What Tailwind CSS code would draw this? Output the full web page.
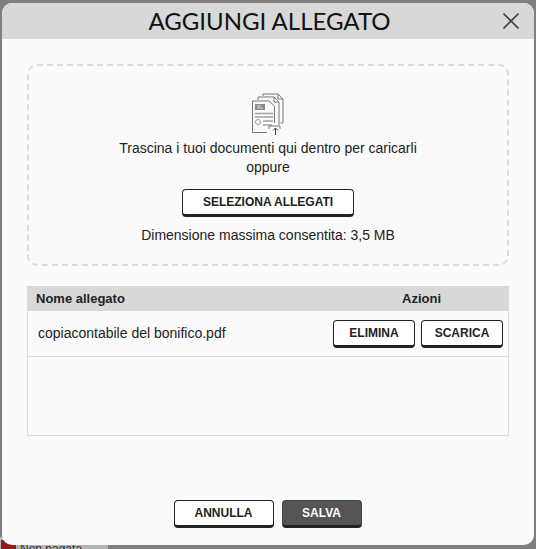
<!DOCTYPE html>
<html lang="it">
<head>
    <meta charset="UTF-8">
    <title>Aggiungi allegato</title>
    <script src="https://cdn.jsdelivr.net/npm/@tailwindcss/browser@4"></script>
</head>
<body class="bg-[#7f7f7f] w-[536px] h-[549px] overflow-hidden font-['Liberation_Sans',sans-serif] text-[#222]">
    <div class="relative h-[549px] pt-[3px] px-[2px]">
        <!-- pagina sotto il modale -->
        <div class="absolute left-0 top-[537px] w-[108px] h-[12px] bg-[#b5b5b5] flex items-start">
            <span class="mt-[3px] ml-[1px] w-[15px] h-[9px] bg-[#8e1b1b]"></span>
            <span class="ml-[4px] mt-[5px] text-[12px] text-[#333] leading-[14px]">Non pagata</span>
        </div>

        <div class="relative w-[532px] h-[542px] bg-[#fafafa] rounded-[10px] overflow-hidden flex flex-col">
            <div class="relative h-[36px] bg-[#d8d8d8] flex items-center justify-center shrink-0">
                <h1 class="font-['Lato',sans-serif] text-[24px] leading-[36px] text-[#111] ml-[3px]">AGGIUNGI ALLEGATO</h1>
                <svg class="absolute left-[501px] top-[10px]" width="16" height="16" viewBox="0 0 16 16" fill="none" stroke="#444" stroke-width="1.6">
                    <path d="M0.5 0.5 L15.5 15.5 M15.5 0.5 L0.5 15.5"/>
                </svg>
            </div>

            <div class="flex flex-col flex-1 px-[25px] pt-[25px]">
                <div class="h-[202px] border-2 border-dashed border-[#dcdcdc] rounded-[10px] flex flex-col items-center pt-[27px]">
                    <svg width="32" height="42" viewBox="0 0 32 42" fill="none" stroke="#777" stroke-width="1">
                        <path d="M11 3 V1 H26 L31 6 V30 H28.5"/>
                        <path d="M26 1 V6 H31"/>
                        <path d="M6 7 V4 H22 L27 9 V32"/>
                        <path d="M22 4 V9 H27"/>
                        <path d="M0.5 39.5 V8 H17 L22.5 13 V30"/>
                        <path d="M0.5 39.5 H15"/>
                        <rect x="3" y="11" width="10" height="6" fill="#8a8a8a" stroke="none"/>
                        <path d="M5 13 H9 M5 15 H11" stroke="#ddd"/>
                        <path d="M3 20.5 H21 M3 24 H21 M11 28 H21 M11 32 H20" stroke="#a0a0a0" stroke-width="1.5"/>
                        <circle cx="6" cy="29" r="2.5" stroke="#999"/>
                        <path d="M17 36 V33 H28 V36"/>
                        <path d="M23.5 42 V35 M21 37.5 L23.5 35 L26 37.5" stroke="#444"/>
                    </svg>
                    <p class="mt-[4px] text-[14px] leading-[18.5px] text-center text-[#222] w-[340px]">Trascina i tuoi documenti qui dentro per caricarli oppure</p>
                    <button class="mt-[13px] w-[172px] h-[28px] bg-white border border-[#222] border-b-[3px] rounded-[4px] text-[12px] font-bold text-[#222]">SELEZIONA ALLEGATI</button>
                    <p class="mt-[9px] text-[14px] leading-[19px] text-[#222]">Dimensione massima consentita: 3,5 MB</p>
                </div>

                <div class="mt-[20px] h-[150px] border border-[#dcdcdc] border-t-0 flex flex-col">
                    <div class="-mx-px h-[25px] bg-[#d8d8d8] flex items-center text-[13px] font-bold text-[#222]">
                        <span class="pl-[9px] flex-1">Nome allegato</span>
                        <span class="w-[107px]">Azioni</span>
                    </div>
                    <div class="h-[46px] border-b border-[#dcdcdc] flex items-center justify-between pl-[10px] pr-[5px]">
                        <span class="text-[14px]">copiacontabile del bonifico.pdf</span>
                        <div class="flex gap-[6px]">
                            <button class="w-[82px] h-[28px] bg-white border border-[#222] border-b-[3px] rounded-[4px] text-[12px] font-bold text-[#222]">ELIMINA</button>
                            <button class="w-[82px] h-[28px] bg-white border border-[#222] border-b-[3px] rounded-[4px] text-[12px] font-bold text-[#222]">SCARICA</button>
                        </div>
                    </div>
                </div>

                <div class="mt-[64px] flex justify-center gap-[8px] pr-[1px]">
                    <button class="w-[100px] h-[28px] bg-white border border-[#222] border-b-[3px] rounded-[4px] text-[12px] font-bold text-[#222]">ANNULLA</button>
                    <button class="w-[80px] h-[28px] bg-[#555] border border-[#444] border-b-[3px] border-b-[#222] rounded-[4px] text-[12px] font-bold text-white">SALVA</button>
                </div>
            </div>
        </div>
    </div>
</body>
</html>
